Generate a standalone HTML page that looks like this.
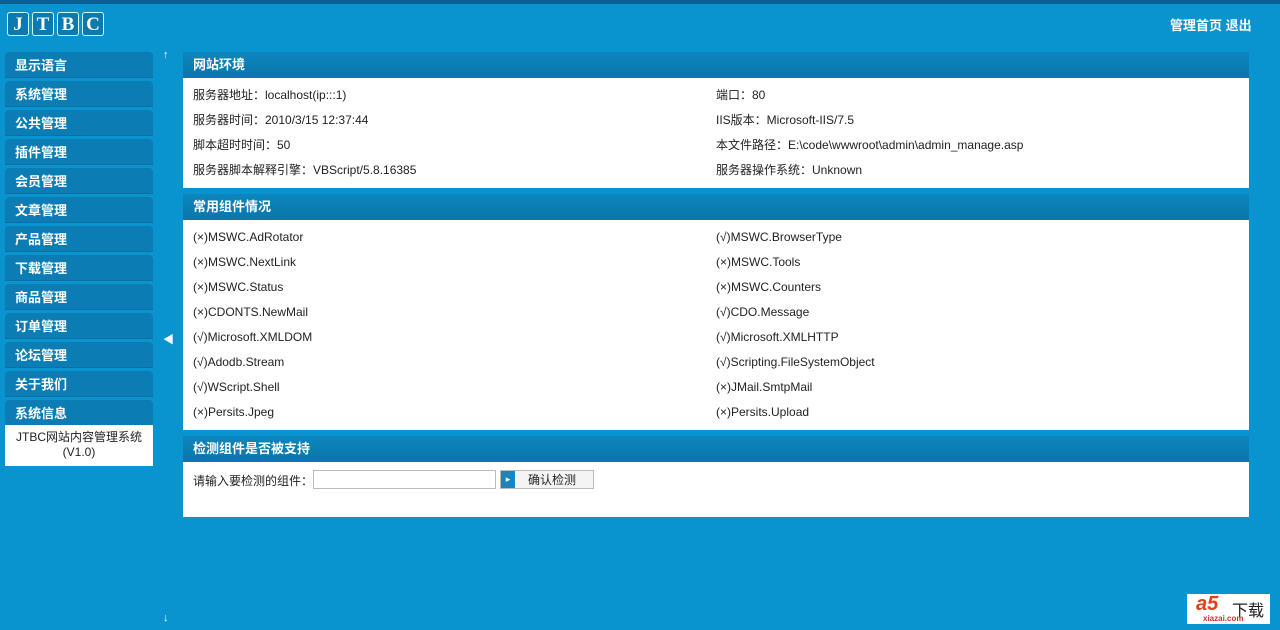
<!DOCTYPE html>
<html><head><meta charset="utf-8"><style>
*{margin:0;padding:0;box-sizing:border-box}
body{width:1280px;height:630px;overflow:hidden;background:#0a94cf;font-family:"Liberation Sans","Noto Sans CJK SC",sans-serif;font-size:12px;color:#222;position:relative}
.top{position:absolute;left:0;top:0;width:1280px;height:4px;background:#0a5f94}
.logo{position:absolute;left:7px;top:12px;display:flex;gap:3px}
.logo span{width:22px;height:24px;border:1px solid #cfe;border-radius:3px;color:#fff;font-family:"Liberation Serif",serif;font-weight:bold;font-size:19px;text-align:center;line-height:24px;background:#0c7ab0}
.tr{position:absolute;left:1170px;top:15px;color:#fff;font-weight:bold;font-size:13px}
.menu{position:absolute;left:5px;top:52px;width:148px}
.menu div{height:26px;margin-bottom:3px;background:#0b7db4;border-radius:4px 4px 0 0;color:#fff;font-weight:bold;font-size:13px;line-height:27px;padding-left:10px;border-bottom:1px solid #0a6fa2}
.info{position:absolute;left:5px;top:425px;width:148px;height:41px;background:#fff;text-align:center;font-size:12px;line-height:15px;padding-top:5px;color:#222}
.arr{position:absolute;color:#fff;font-size:11px}
.hd{position:absolute;left:183px;width:1066px;height:26px;background:linear-gradient(#0b86bd,#0a76aa);color:#fff;font-weight:bold;font-size:13px;line-height:26px;padding-left:10px}
.bd{position:absolute;left:183px;width:1066px;background:#fff}
.row{position:absolute;font-size:12px;white-space:nowrap}
</style></head><body>
<div class="top"></div>
<div class="logo"><span>J</span><span>T</span><span>B</span><span>C</span></div>
<div class="tr">管理首页 退出</div>
<div class="menu">
<div>显示语言</div><div>系统管理</div><div>公共管理</div><div>插件管理</div><div>会员管理</div><div>文章管理</div><div>产品管理</div><div>下载管理</div><div>商品管理</div><div>订单管理</div><div>论坛管理</div><div>关于我们</div><div>系统信息</div>
</div>
<div class="info">JTBC网站内容管理系统<br>(V1.0)</div>
<div class="arr" style="left:163px;top:49px;font-weight:bold">↑</div>
<div class="arr" style="left:163px;top:331px">◀</div>
<div class="arr" style="left:163px;top:612px;font-weight:bold">↓</div>

<div class="hd" style="top:52px">网站环境</div>
<div class="bd" style="top:78px;height:110px"></div>
<div class="hd" style="top:194px">常用组件情况</div>
<div class="bd" style="top:220px;height:210px"></div>
<div class="hd" style="top:436px">检测组件是否被支持</div>
<div class="bd" style="top:462px;height:55px"></div>

<div class="row" style="left:193px;top:86px">服务器地址：localhost(ip:::1)</div>
<div class="row" style="left:716px;top:86px">端口：80</div>
<div class="row" style="left:193px;top:111px">服务器时间：2010/3/15 12:37:44</div>
<div class="row" style="left:716px;top:111px">IIS版本：Microsoft-IIS/7.5</div>
<div class="row" style="left:193px;top:136px">脚本超时时间：50</div>
<div class="row" style="left:716px;top:136px">本文件路径：E:\code\wwwroot\admin\admin_manage.asp</div>
<div class="row" style="left:193px;top:161px">服务器脚本解释引擎：VBScript/5.8.16385</div>
<div class="row" style="left:716px;top:161px">服务器操作系统：Unknown</div>

<div class="row" style="left:193px;top:230px">(×)MSWC.AdRotator</div>
<div class="row" style="left:716px;top:230px">(√)MSWC.BrowserType</div>
<div class="row" style="left:193px;top:255px">(×)MSWC.NextLink</div>
<div class="row" style="left:716px;top:255px">(×)MSWC.Tools</div>
<div class="row" style="left:193px;top:280px">(×)MSWC.Status</div>
<div class="row" style="left:716px;top:280px">(×)MSWC.Counters</div>
<div class="row" style="left:193px;top:305px">(×)CDONTS.NewMail</div>
<div class="row" style="left:716px;top:305px">(√)CDO.Message</div>
<div class="row" style="left:193px;top:330px">(√)Microsoft.XMLDOM</div>
<div class="row" style="left:716px;top:330px">(√)Microsoft.XMLHTTP</div>
<div class="row" style="left:193px;top:355px">(√)Adodb.Stream</div>
<div class="row" style="left:716px;top:355px">(√)Scripting.FileSystemObject</div>
<div class="row" style="left:193px;top:380px">(√)WScript.Shell</div>
<div class="row" style="left:716px;top:380px">(×)JMail.SmtpMail</div>
<div class="row" style="left:193px;top:405px">(×)Persits.Jpeg</div>
<div class="row" style="left:716px;top:405px">(×)Persits.Upload</div>

<div class="row" style="left:193px;top:472px">请输入要检测的组件：</div>
<div style="position:absolute;left:313px;top:470px;width:183px;height:19px;border:1px solid #bbb;background:#fff"></div>
<div style="position:absolute;left:500px;top:470px;width:94px;height:19px;border:1px solid #bbb;background:#f4f4f4;font-size:12px;line-height:18px;padding-left:27px">确认检测</div>
<div style="position:absolute;left:501px;top:471px;width:14px;height:17px;background:#1a86c0;color:#fff;font-size:9px;line-height:17px;text-align:center">▸</div>

<div style="position:absolute;left:1187px;top:594px;width:83px;height:30px;background:#fff"></div>
<div style="position:absolute;left:1196px;top:593px;color:#e2401c;font-weight:bold;font-size:20px;font-style:italic">a5</div>
<div style="position:absolute;left:1232px;top:597px;color:#222;font-size:16px">下载</div>
<div style="position:absolute;left:1203px;top:614px;color:#c33;font-size:8px;font-weight:bold">xiazai.com</div>
</body></html>
